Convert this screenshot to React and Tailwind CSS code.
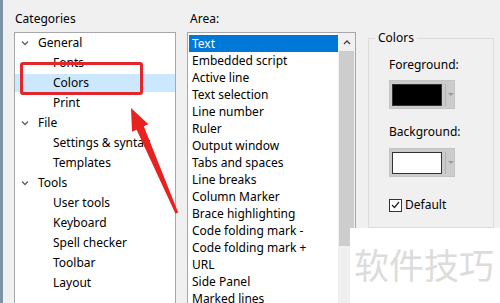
import React from "react";

const tree = [
  { label: "General", group: true },
  { label: "Fonts" },
  { label: "Colors", selected: true },
  { label: "Print" },
  { label: "File", group: true },
  { label: "Settings & syntax" },
  { label: "Templates" },
  { label: "Tools", group: true },
  { label: "User tools" },
  { label: "Keyboard" },
  { label: "Spell checker" },
  { label: "Toolbar" },
  { label: "Layout" },
];

const areas = [
  "Text",
  "Embedded script",
  "Active line",
  "Text selection",
  "Line number",
  "Ruler",
  "Output window",
  "Tabs and spaces",
  "Line breaks",
  "Column Marker",
  "Brace highlighting",
  "Code folding mark -",
  "Code folding mark +",
  "URL",
  "Side Panel",
  "Marked lines",
];

function Chevron({ up = false }) {
  return (
    <svg width="8" height="6" viewBox="0 0 8 6" className="shrink-0">
      <path
        d={up ? "M1 5 L4 2 L7 5" : "M1 1.5 L4 4.5 L7 1.5"}
        fill="none"
        stroke={up ? "#404040" : "#606060"}
        strokeWidth="1.3"
      />
    </svg>
  );
}

function ColorButton({ color }) {
  return (
    <div className="flex items-center w-[66px] h-[29px] bg-[#cccccc] border border-[#c4c4c4] pl-[2px]">
      <div className="w-[52px] h-[22px] border border-[#333]" style={{ background: color }} />
      <div className="ml-[3px] w-px h-[22px] bg-[#b4b4b4]" />
      <svg width="6" height="4" viewBox="0 0 6 4" className="ml-[2px]">
        <path d="M0 0 L6 0 L3 3 Z" fill="#9a9a9a" />
      </svg>
    </div>
  );
}

export default function App() {
  return (
    <div
      className="relative w-[500px] h-[303px] overflow-hidden bg-[#f0f0f0] flex border-l-[3px] border-[#7f93a6] text-[12px] text-black"
      style={{ fontFamily: '"Noto Sans", "Noto Sans CJK SC", sans-serif' }}
    >
      {/* ── Categories ─────────────────────────────────────────── */}
      <div className="ml-[11px] w-[162px] flex flex-col pt-[11px]">
        <div className="h-4 leading-4 pl-px">Categories</div>
        <div className="mt-[5px] flex-1 bg-white border border-[#a5a7ab] border-b-0 pt-0">
          {tree.map((item) => (
            <div key={item.label} className="h-5 py-px">
              <div
                className={
                  "h-[18px] flex items-center whitespace-nowrap overflow-hidden " +
                  (item.selected ? "bg-[#cce8ff]" : "")
                }
              >
                {item.group ? (
                  <>
                    <span className="ml-[6px] mr-[9px] flex">
                      <Chevron />
                    </span>
                    <span>{item.label}</span>
                  </>
                ) : (
                  <span className="ml-[38px]">{item.label}</span>
                )}
              </div>
            </div>
          ))}
        </div>
      </div>

      {/* ── Area list ──────────────────────────────────────────── */}
      <div className="ml-[11px] w-[169px] flex flex-col pt-[11px]">
        <div className="h-4 leading-4 pl-[3px]">Area:</div>
        <div className="mt-[5px] flex-1 bg-white border border-[#a5a7ab] border-b-0 flex">
          <div className="flex-1 pt-[2px] pl-px">
            {areas.map((a, i) => (
              <div
                key={a}
                className={
                  "h-[17px] leading-[17px] pl-[3px] whitespace-nowrap " +
                  (i === 0 ? "bg-[#0078d7] text-white" : "")
                }
              >
                {a}
              </div>
            ))}
          </div>
          <div className="w-[17px] flex flex-col bg-[#f0f0f0]">
            <div className="h-[18px] flex items-center justify-center">
              <Chevron up />
            </div>
            <div className="h-[195px] mx-px bg-[#cdcdcd]" />
          </div>
        </div>
      </div>

      {/* ── Colors group ───────────────────────────────────────── */}
      <div className="ml-[12px] w-[126px] pt-[38px]">
        <div className="relative h-[190px] border border-[#dcdcdc] pl-[20px] pt-[18px]">
          <div className="absolute -top-[9px] left-[6px] px-[3px] bg-[#f0f0f0] leading-4">
            Colors
          </div>
          <div className="leading-4">Foreground:</div>
          <div className="mt-[7px]">
            <ColorButton color="#000000" />
          </div>
          <div className="mt-[15px] leading-4">Background:</div>
          <div className="mt-[8px]">
            <ColorButton color="#ffffff" />
          </div>
          <div className="mt-[19px] flex items-center">
            <div className="w-[13px] h-[13px] border border-[#333] bg-white flex items-center justify-center">
              <svg width="9" height="8" viewBox="0 0 9 8">
                <path d="M1 4 L3.5 6.5 L8 1" fill="none" stroke="#222" strokeWidth="1.2" />
              </svg>
            </div>
            <span className="ml-[3px]">Default</span>
          </div>
        </div>
      </div>

      {/* ── Annotations ───────────────────────────────────────── */}
      <div className="absolute left-[17px] top-[62px] w-[123px] h-[33px] border-[3px] border-[#e2262c] rounded-[3px]" />
      <svg className="absolute -left-[3px] top-0" width="500" height="303">
        <polygon
          points="131,108 148.4,124.2 143.8,126.3 178.2,212.4 175.4,213.6 136.6,129.7 132,131.8"
          fill="#e8231f"
        />
      </svg>

      {/* ── Watermark ─────────────────────────────────────────── */}
      <div className="absolute left-[347px] top-[228px] w-[153px] h-[75px] bg-white flex items-center pl-[4px] pb-[4px]">
        <span
          className="text-[35px] leading-none text-[#dcdcdc]"
          style={{ fontFamily: '"Noto Sans CJK SC", sans-serif' }}
        >
          软件技巧
        </span>
      </div>
    </div>
  );
}
